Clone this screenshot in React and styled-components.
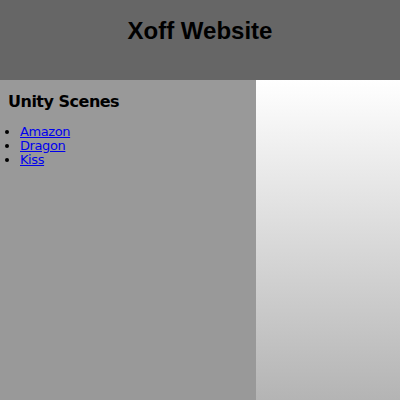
import React from "react";
import styled, { createGlobalStyle } from "styled-components";

const Global = createGlobalStyle`
  html, body { margin: 0; padding: 0; }
  body { width: 400px; height: 400px; overflow: hidden; font-family: "DejaVu Sans", Verdana, sans-serif; }
`;

const Page = styled.div`
  display: flex;
  flex-direction: column;
  width: 400px;
  height: 400px;
`;

const Header = styled.header`
  height: 80px;
  background: #666666;
  display: flex;
  justify-content: center;
  box-sizing: border-box;
  padding-top: 17px;
`;

const Title = styled.h1`
  margin: 0;
  font-family: "Liberation Sans", Arial, sans-serif;
  font-weight: bold;
  font-size: 24px;
  line-height: 28px;
  color: #000;
`;

const Body = styled.div`
  flex: 1;
  display: flex;
`;

const Sidebar = styled.nav`
  width: 256px;
  background: #999999;
  box-sizing: border-box;
  padding: 12px 8px 0 8px;
`;

const Content = styled.main`
  flex: 1;
  background: linear-gradient(to bottom, #ffffff 0%, #b4b4b4 100%);
`;

const SectionTitle = styled.h2`
  margin: 0 0 13px 0;
  font-family: "DejaVu Sans", Verdana, sans-serif;
  font-weight: bold;
  font-size: 16px;
  letter-spacing: -0.5px;
  line-height: 20px;
  color: #000;
`;

const List = styled.ul`
  margin: 0;
  padding-left: 12px;
  font-family: "DejaVu Sans", Verdana, sans-serif;
  font-size: 13px;
  letter-spacing: -0.4px;
  line-height: 14px;
`;

const Item = styled.li``;

const Link = styled.a`
  color: #0000ee;
  text-decoration: underline;
`;

export default function App() {
  const scenes = ["Amazon", "Dragon", "Kiss"];
  return (
    <>
      <Global />
      <Page>
        <Header>
          <Title>Xoff Website</Title>
        </Header>
        <Body>
          <Sidebar>
            <SectionTitle>Unity Scenes</SectionTitle>
            <List>
              {scenes.map((s) => (
                <Item key={s}>
                  <Link href="#">{s}</Link>
                </Item>
              ))}
            </List>
          </Sidebar>
          <Content />
        </Body>
      </Page>
    </>
  );
}
